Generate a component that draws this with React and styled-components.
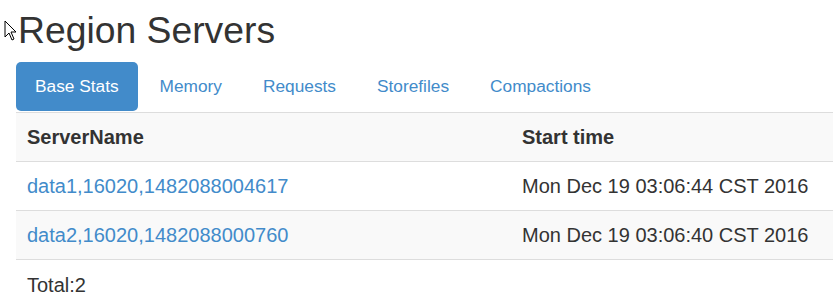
import React from 'react';
import styled, { createGlobalStyle } from 'styled-components';

const GlobalStyle = createGlobalStyle`
    html, body {
        margin: 0;
        padding: 0;
        background: #fff;
        overflow: hidden;
    }
    body {
        font-family: 'Liberation Sans', Arial, sans-serif;
        color: #333;
    }
`

const Page = styled.div`
    position: relative;
    padding: 0 0 0 16px;
    width: 833px;
    height: 299px;
    box-sizing: border-box;
    overflow: hidden;
`

const Heading = styled.h1`
    margin: 0;
    padding: 8px 0 0 2px;
    height: 55px;
    box-sizing: border-box;
    font-size: 37.3px;
    font-weight: 400;
    line-height: 44px;
    color: #333;
`

const Cursor = styled.svg`
    position: absolute;
    left: 4px;
    top: 20px;
`

const Tabs = styled.ul`
    display: flex;
    gap: 3px;
    margin: 7px 0 0;
    padding: 0;
    list-style: none;
`

const Tab = styled.li`
    padding: 12px 19px;
    font-size: 17.3px;
    line-height: 25px;
    border-radius: 5px;
    color: ${p => (p.$active ? '#fff' : '#428bca')};
    background: ${p => (p.$active ? '#428bca' : 'transparent')};
    cursor: pointer;
`

const Table = styled.table`
    width: 840px;
    border-collapse: collapse;
    margin-top: 1px;
    font-size: 20px;
    line-height: 28px;
    table-layout: fixed;
`

const HeadCell = styled.th`
    text-align: left;
    font-weight: 700;
    padding: 10px 11px;
    border-top: 1px solid #ddd;
    border-bottom: 1px solid #ddd;
    width: ${p => p.$width || 'auto'};
`

const Row = styled.tr`
    background: ${p => (p.$striped ? '#f9f9f9' : '#fff')};
`

const Cell = styled.td`
    padding: 10px 11px;
    border-bottom: 1px solid #ddd;
    white-space: nowrap;
`

const Link = styled.a`
    color: #428bca;
    text-decoration: none;
`

const Total = styled.div`
    padding: 11px 11px 0;
    font-size: 20px;
    line-height: 28px;
`

const servers = [
    { name: 'data1,16020,1482088004617', start: 'Mon Dec 19 03:06:44 CST 2016' },
    { name: 'data2,16020,1482088000760', start: 'Mon Dec 19 03:06:40 CST 2016' },
];

const tabs = ['Base Stats', 'Memory', 'Requests', 'Storefiles', 'Compactions'];

export default function App() {
    return (
        <Page>
            <GlobalStyle />
            <Cursor width="14" height="22" viewBox="0 0 14 22">
                <path d="M1 1 L1 17 L5 13 L8 20 L10 19 L7 12 L12 12 Z" fill="#fff" stroke="#000" strokeWidth="1" strokeLinejoin="miter" />
            </Cursor>
            <Heading>Region Servers</Heading>
            <Tabs>
                {tabs.map((t, i) => (
                    <Tab key={t} $active={i === 0}>{t}</Tab>
                ))}
            </Tabs>
            <Table>
                <thead>
                    <Row $striped>
                        <HeadCell $width="473px">ServerName</HeadCell>
                        <HeadCell>Start time</HeadCell>
                    </Row>
                </thead>
                <tbody>
                    {servers.map((s, i) => (
                        <Row key={s.name} $striped={i % 2 === 1}>
                            <Cell><Link href="#">{s.name}</Link></Cell>
                            <Cell>{s.start}</Cell>
                        </Row>
                    ))}
                </tbody>
            </Table>
            <Total>Total:2</Total>
        </Page>
    );
}
